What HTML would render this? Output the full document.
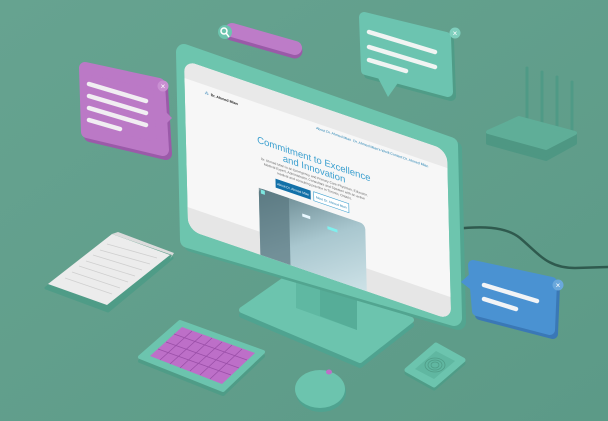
<!DOCTYPE html>
<html><head><meta charset="utf-8"><style>
html,body{margin:0;padding:0;width:608px;height:421px;overflow:hidden;background:#62a08c}
svg{display:block}
text{font-family:"Liberation Sans",sans-serif}
</style></head><body>
<svg width="608" height="421" viewBox="0 0 608 421" xmlns="http://www.w3.org/2000/svg">
<defs>
<linearGradient id="bg" x1="0" y1="0" x2="1" y2="1"><stop offset="0" stop-color="#66a390"/><stop offset="1" stop-color="#5c9a87"/></linearGradient>
<linearGradient id="img" x1="0" y1="0" x2="1" y2="1"><stop offset="0" stop-color="#5f7e86"/><stop offset="0.5" stop-color="#a9c7cf"/><stop offset="1" stop-color="#cfe3e8"/></linearGradient>
<clipPath id="scr"><rect x="0" y="0" width="262" height="170" rx="12"/></clipPath>
</defs>
<rect width="608" height="421" fill="url(#bg)"/>

<!-- cable -->
<path d="M455 229 C480 226 505 226 520 238 C540 255 548 268 575 268 L608 267" fill="none" stroke="#2f5a4e" stroke-width="2.5"/>

<!-- router -->
<g stroke-linecap="round">
<line x1="527" y1="68" x2="527" y2="124" stroke="#4f9a86" stroke-width="3"/>
<line x1="542" y1="72" x2="542" y2="130" stroke="#4f9a86" stroke-width="3"/>
<line x1="557" y1="77" x2="557" y2="135" stroke="#4f9a86" stroke-width="3"/>
<line x1="572" y1="82" x2="572" y2="135" stroke="#4f9a86" stroke-width="3"/>
</g>
<polygon points="488,132 546,148 575,133 575,143 546,159 488,143" fill="#4e9783" stroke="#4e9783" stroke-width="4" stroke-linejoin="round"/>
<polygon points="488,132 519,118 575,133 546,148" fill="#5fae98" stroke="#5fae98" stroke-width="4" stroke-linejoin="round"/>

<!-- search bar -->
<line x1="232" y1="33" x2="295" y2="51" stroke="#9a5aa8" stroke-width="15" stroke-linecap="round"/>
<line x1="232" y1="30" x2="295" y2="48" stroke="#bd7cc8" stroke-width="14" stroke-linecap="round"/>
<circle cx="225" cy="32" r="7" fill="#6cc4ae"/>
<circle cx="224" cy="31" r="3" fill="none" stroke="#fff" stroke-width="1.5"/>
<line x1="226" y1="33" x2="229" y2="37" stroke="#fff" stroke-width="1.5"/>

<!-- purple bubble -->
<polygon points="85,68 159,84 163,150 87,132" fill="#9b5aa9" stroke="#9b5aa9" stroke-width="12" stroke-linejoin="round" transform="translate(3,4)"/>
<polygon points="85,68 159,84 163,150 87,132" fill="#bb79c6" stroke="#bb79c6" stroke-width="12" stroke-linejoin="round"/>
<polygon points="162,108 172,118 162,128" fill="#bb79c6"/>
<g stroke="#f1eef2" stroke-width="4.5" stroke-linecap="round">
<line x1="89" y1="84" x2="146" y2="101"/><line x1="89" y1="96" x2="146" y2="113"/><line x1="89" y1="108" x2="146" y2="125"/><line x1="89" y1="120" x2="120" y2="129"/>
</g>
<circle cx="163" cy="86" r="5.5" fill="#c98fd2"/>
<text x="163" y="89" font-size="8" fill="#fff" text-anchor="middle">×</text>

<!-- green bubble -->
<polygon points="364,17 446,37 448,92 366,70" fill="#4f9c87" stroke="#4f9c87" stroke-width="10" stroke-linejoin="round" transform="translate(3,4)"/>
<polygon points="364,17 446,37 448,92 366,70" fill="#6cc4b0" stroke="#6cc4b0" stroke-width="10" stroke-linejoin="round"/>
<polygon points="375,72 400,80 388,97" fill="#6cc4b0"/>
<g stroke="#f1f4f3" stroke-width="4.5" stroke-linecap="round">
<line x1="369" y1="32" x2="435" y2="52"/><line x1="369" y1="47" x2="435" y2="67"/><line x1="369" y1="60" x2="406" y2="71"/>
</g>
<circle cx="455" cy="33" r="5.5" fill="#7fcfbd"/>
<text x="455" y="36" font-size="8" fill="#fff" text-anchor="middle">×</text>

<!-- notebook -->
<polygon points="46,285 112,233 172,255 108,308" fill="#4f9c87" stroke="#4f9c87" stroke-width="3" stroke-linejoin="round" transform="translate(0,3)"/>
<polygon points="48,284 112,234 170,255 107,305" fill="#ececec"/>
<polygon points="112,234 118,232 174,253 170,259 172,255" fill="#dcdcdc"/>
<g stroke="#cfcfcf" stroke-width="0.8">
<line x1="65" y1="278" x2="112" y2="294"/><line x1="72" y1="272" x2="120" y2="288"/><line x1="79" y1="266" x2="128" y2="282"/><line x1="86" y1="261" x2="135" y2="276"/><line x1="93" y1="255" x2="142" y2="270"/><line x1="100" y1="250" x2="150" y2="264"/><line x1="107" y1="244" x2="157" y2="258"/>
</g>

<!-- monitor stand -->
<polygon points="242,310 289,277 411,320 360,360" fill="#4fa390" stroke="#4fa390" stroke-width="6" stroke-linejoin="round" transform="translate(0,5)"/>
<polygon points="242,310 289,277 411,320 360,360" fill="#6cc4ae" stroke="#6cc4ae" stroke-width="6" stroke-linejoin="round"/>
<polygon points="296,262 357,283 357,330 296,308" fill="#5fb8a2"/>
<polygon points="320,270 357,283 357,330 320,316" fill="#56ad98"/>

<!-- monitor frame -->
<polygon points="184,52 450,145 454,318 188,240" fill="#52a590" stroke="#52a590" stroke-width="16" stroke-linejoin="round" transform="translate(4,4)"/>
<polygon points="184,52 450,145 454,318 188,240" fill="#6dc5ae" stroke="#6dc5ae" stroke-width="16" stroke-linejoin="round"/>

<!-- screen -->
<g transform="matrix(1.004,0.344,0.024,1,184,60)">
<g clip-path="url(#scr)">
<rect x="0" y="0" width="262" height="170" fill="#f7f7f7"/>
<rect x="0" y="0" width="262" height="18" fill="#e9e9e9"/>
<rect x="0" y="147" width="262" height="30" fill="#e6e6e6"/>
<text x="20" y="27" font-size="4" fill="#2b7fb5">⁂</text>
<text x="26" y="27" font-size="3.6" font-weight="bold" fill="#222">Dr. Ahmed Mian</text>
<text x="131" y="24" font-size="3.5" fill="#1f7fb0">About Dr. Ahmed Mian</text>
<text x="168" y="24" font-size="3.5" fill="#1f7fb0">Dr. Ahmed Mian's Work</text>
<text x="205" y="24" font-size="3.5" fill="#1f7fb0">Contact Dr. Ahmed Mian</text>
<text x="128" y="58" font-size="9.5" fill="#3a9fcf" text-anchor="middle">Commitment to Excellence</text>
<text x="128" y="68" font-size="9.5" fill="#3a9fcf" text-anchor="middle">and Innovation</text>
<g font-size="3.3" fill="#666" text-anchor="middle">
<text x="128" y="74">Dr. Ahmed Mian is an Emergency and Primary Care Physician, Educator,</text>
<text x="128" y="78.5">Medical Expert, Administrator, Consultant and Speaker with an active</text>
<text x="128" y="83">medical and consulting practice in Toronto, Ontario.</text>
</g>
<rect x="89" y="88" width="35" height="9" fill="#1270a8"/>
<text x="106.5" y="93.8" font-size="3.2" fill="#fff" text-anchor="middle">About Dr. Ahmed Mian</text>
<rect x="127" y="88" width="35" height="9" fill="#fff" stroke="#3a9fcf" stroke-width="0.6"/>
<text x="144.5" y="93.8" font-size="3.2" fill="#1f7fb0" text-anchor="middle">Meet Dr. Ahmed Mian</text>
<rect x="72" y="103" width="106" height="70" rx="5" fill="url(#img)"/>
<rect x="72" y="103" width="30" height="70" fill="#5a7880" opacity="0.7"/>
<rect x="115" y="114" width="8" height="3" fill="#e8f8ff"/>
<rect x="140" y="118" width="10" height="3" fill="#7ff0ee"/>
<rect x="74" y="104" width="4" height="4" fill="#7de7e0"/>
</g>
</g>

<!-- blue bubble -->
<polygon points="473,265 552,282 550,330 477,311" fill="#3a78b6" stroke="#3a78b6" stroke-width="10" stroke-linejoin="round" transform="translate(3,4)"/>
<polygon points="473,265 552,282 550,330 477,311" fill="#4a92d2" stroke="#4a92d2" stroke-width="10" stroke-linejoin="round"/>
<polygon points="472,272 461,282 474,292" fill="#4a92d2"/>
<g stroke="#f2f4f6" stroke-width="4.5" stroke-linecap="round">
<line x1="484" y1="285" x2="537" y2="301"/><line x1="484" y1="299" x2="516" y2="309"/>
</g>
<circle cx="558" cy="285" r="5.5" fill="#6aa8dc"/>
<text x="558" y="288" font-size="8" fill="#fff" text-anchor="middle">×</text>

<!-- keyboard -->
<polygon points="140,357 180,322 263,352 223,390" fill="#4f9c87" stroke="#4f9c87" stroke-width="4" stroke-linejoin="round" transform="translate(0,4)"/>
<polygon points="140,357 180,322 263,352 223,390" fill="#6cc4ae" stroke="#6cc4ae" stroke-width="4" stroke-linejoin="round"/>
<polygon points="150,356 182,327 255,353 222,384" fill="#bd6fc8"/>
<g stroke="#9a4fa8" stroke-width="0.8">
<line x1="160" y1="360" x2="192" y2="331"/><line x1="170" y1="364" x2="202" y2="335"/><line x1="180" y1="368" x2="212" y2="338"/><line x1="190" y1="371" x2="222" y2="342"/><line x1="200" y1="375" x2="232" y2="345"/><line x1="210" y1="379" x2="242" y2="349"/>
<line x1="158" y1="349" x2="231" y2="375"/><line x1="166" y1="342" x2="239" y2="368"/><line x1="174" y1="334" x2="247" y2="360"/>
</g>

<!-- mouse -->
<ellipse cx="321" cy="392" rx="25" ry="20" fill="#4fa390"/>
<ellipse cx="320" cy="389" rx="25" ry="19" fill="#6cc4ae"/>
<ellipse cx="329" cy="372" rx="3" ry="2.5" fill="#bd6fc8"/>

<!-- fingerprint pad -->
<polygon points="407,370 436,345 463,360 434,385" fill="#4f9c87" stroke="#4f9c87" stroke-width="5" stroke-linejoin="round" transform="translate(0,3)"/>
<polygon points="407,370 436,345 463,360 434,385" fill="#6cc4ae" stroke="#6cc4ae" stroke-width="5" stroke-linejoin="round"/>
<polygon points="415,369 436,351 455,361 434,379" fill="#60b7a1"/>
<g fill="none" stroke="#4f9c87" stroke-width="0.8">
<ellipse cx="435" cy="365" rx="4" ry="3"/><ellipse cx="435" cy="365" rx="7" ry="5"/><ellipse cx="435" cy="365" rx="10" ry="7"/>
</g>
</svg>
</body></html>
